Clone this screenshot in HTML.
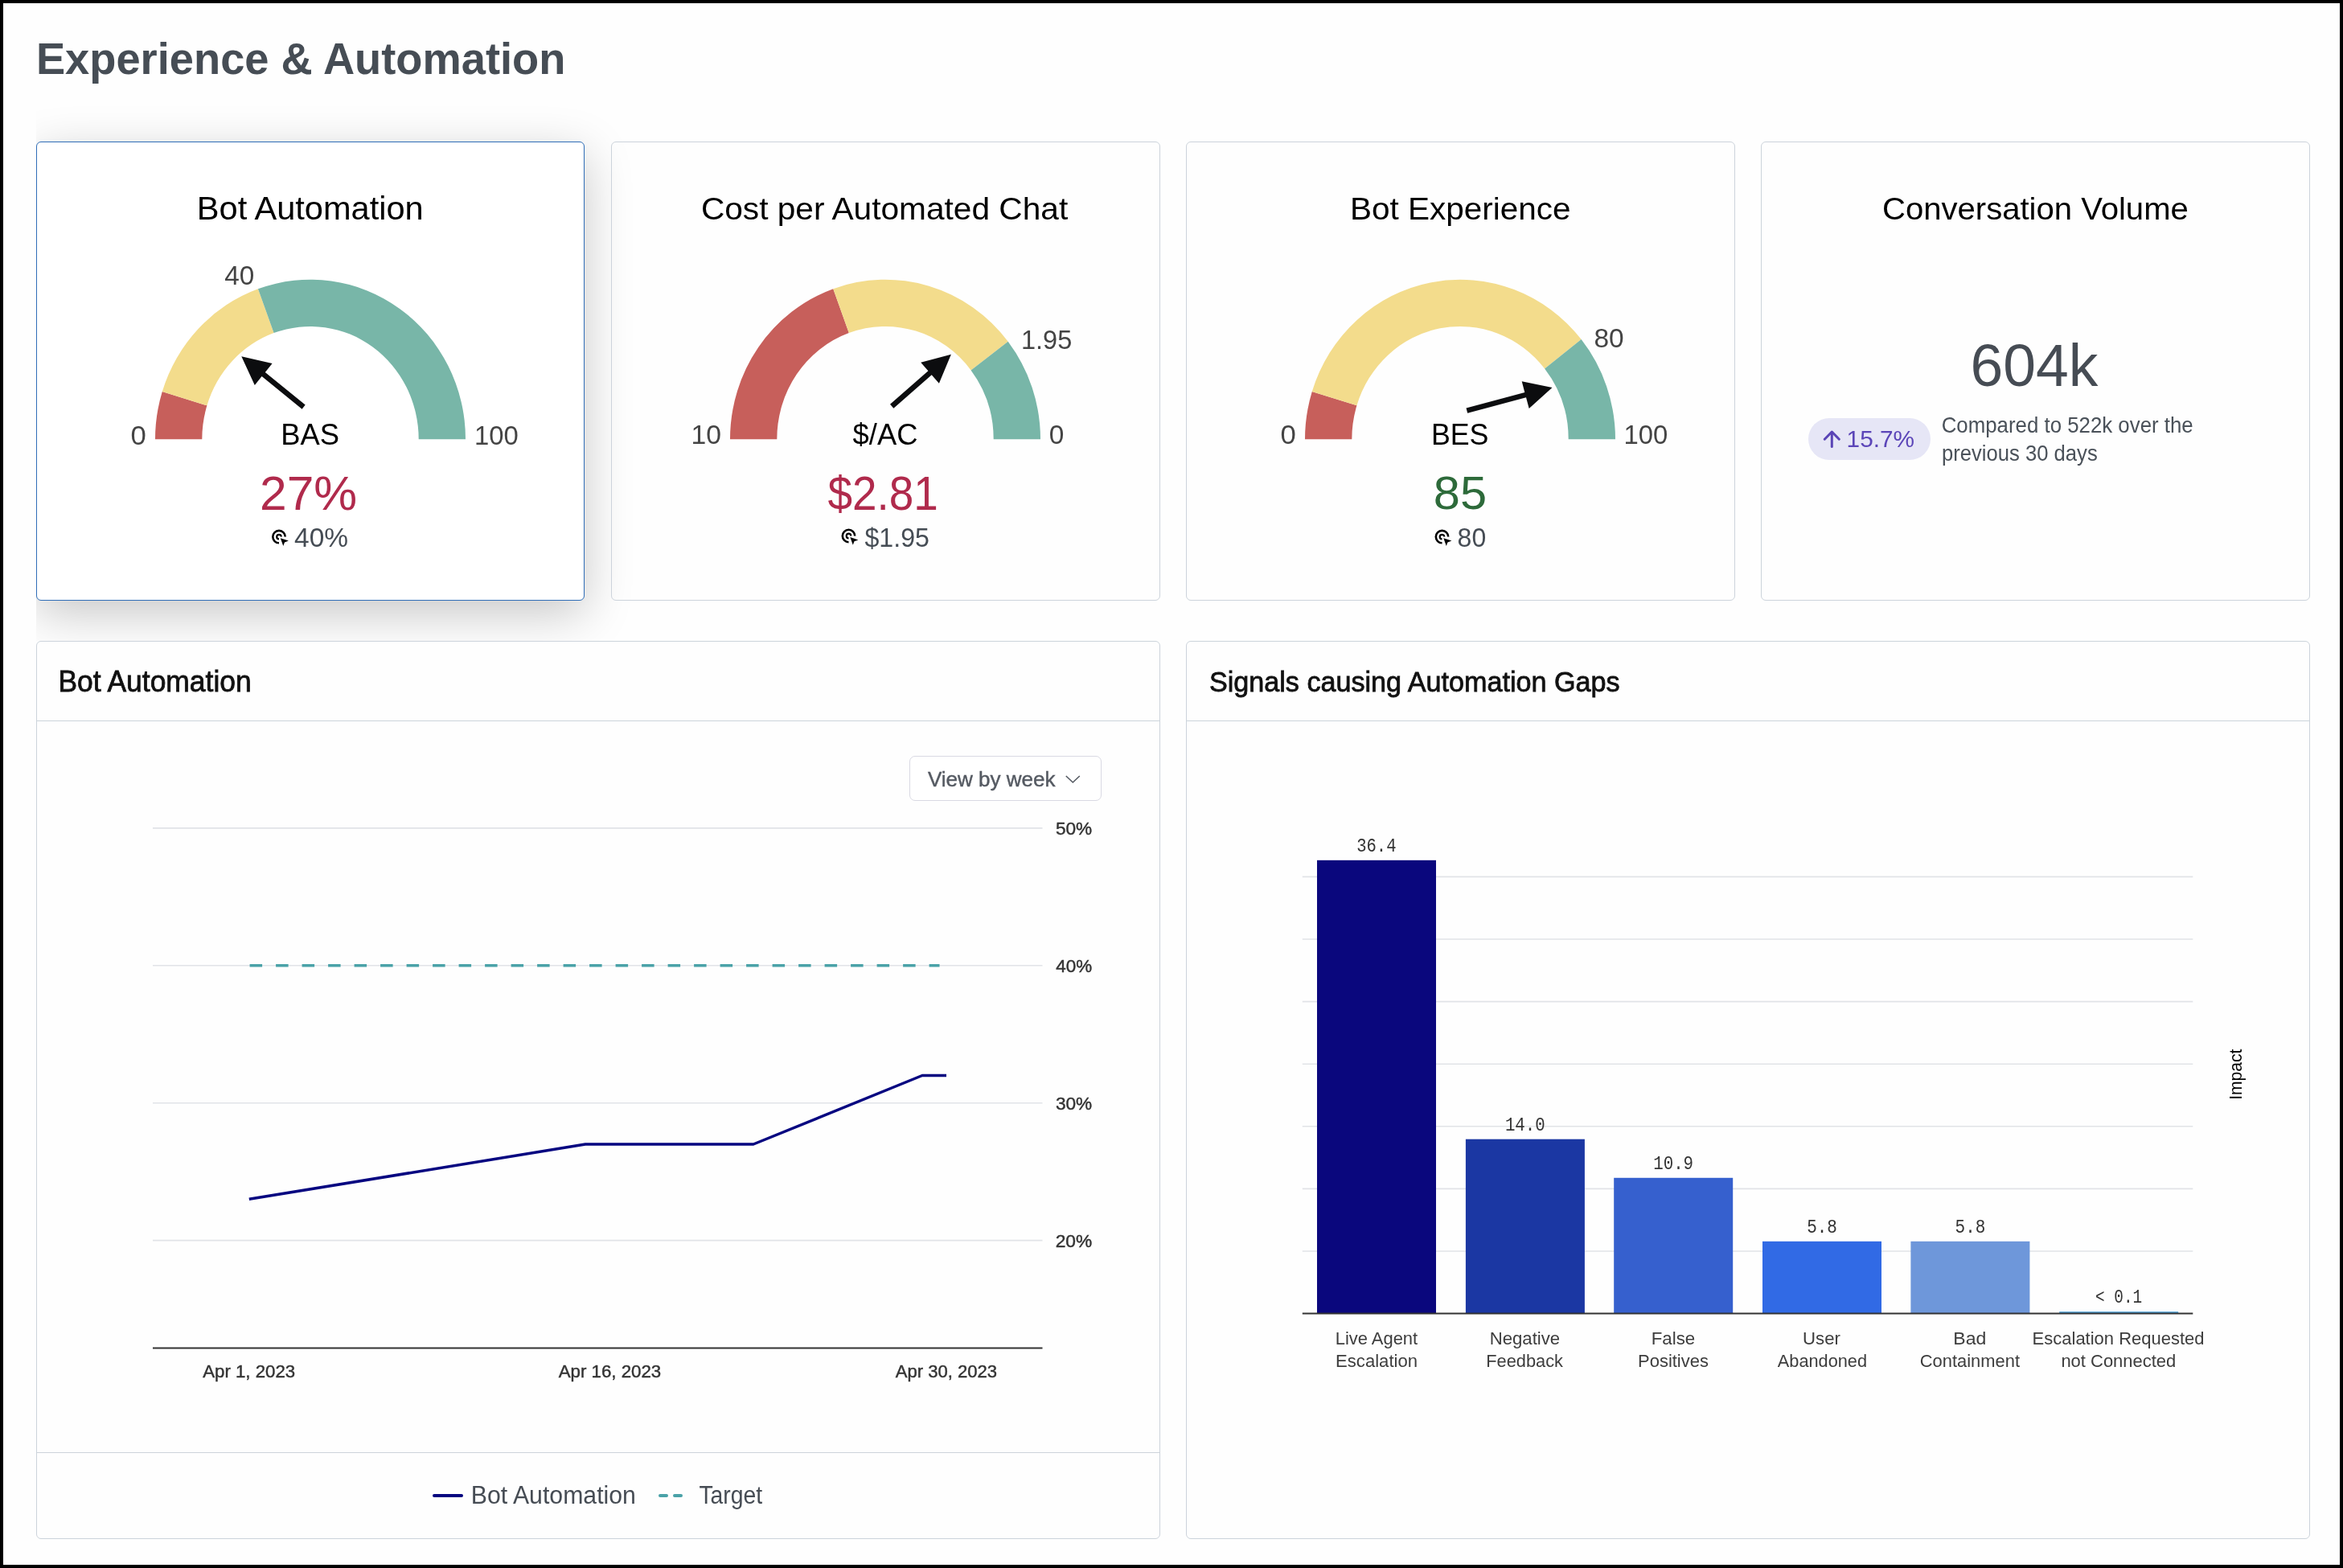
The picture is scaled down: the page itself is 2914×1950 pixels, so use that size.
<!DOCTYPE html>
<html><head><meta charset="utf-8"><style>
html,body{margin:0;padding:0;}
body{width:2914px;height:1950px;position:relative;overflow:hidden;background:#fefefe;font-family:"Liberation Sans",sans-serif;}
.card{position:absolute;box-sizing:border-box;border:1.2px solid #ccd3db;border-radius:6px;}
.div{position:absolute;height:0;border-top:1.2px solid #ccd3db;}
#clip{position:absolute;left:45px;top:0;width:1600px;height:797px;overflow:hidden;}
#c1{position:absolute;left:0;top:176px;width:682px;height:571px;box-sizing:border-box;border:1.3px solid #2f6db7;border-radius:6px;background:#fff;box-shadow:0 16px 60px rgba(0,0,0,0.22);}
#frame{position:absolute;left:0;top:0;width:2914px;height:1950px;box-sizing:border-box;border:4px solid #000;}
svg{position:absolute;left:0;top:0;will-change:transform;}
</style></head><body>
<div id="clip"><div id="c1"></div></div>
<div class="card" style="left:760px;top:176px;width:683px;height:571px;"></div>
<div class="card" style="left:1475px;top:176px;width:683px;height:571px;"></div>
<div class="card" style="left:2190px;top:176px;width:683px;height:571px;"></div>
<div class="card" style="left:45px;top:797px;width:1398px;height:1117px;"></div>
<div class="div" style="left:45px;top:895.5px;width:1398px;"></div>
<div class="div" style="left:45px;top:1806px;width:1398px;"></div>
<div class="card" style="left:1475px;top:797px;width:1398px;height:1117px;"></div>
<div class="div" style="left:1475px;top:895.5px;width:1398px;"></div>
<div style="position:absolute;left:1131px;top:940px;width:238.5px;height:55.5px;box-sizing:border-box;border:1.2px solid #d9d9e3;border-radius:7px;background:#fff"></div>
<div style="position:absolute;left:2249px;top:520px;width:151.6px;height:52px;border-radius:26px;background:#e6e6f6"></div>
<svg width="2914" height="1950" viewBox="0 0 2914 1950">
<g>
<line x1="2278.3" y1="537.5" x2="2278.3" y2="555.5" stroke="#5a44b6" stroke-width="3" stroke-linecap="round"/>
<polyline points="2269.3,546.2 2278.3,537 2287.3,546.2" fill="none" stroke="#5a44b6" stroke-width="3" stroke-linecap="round" stroke-linejoin="round"/>
</g>
<path d="M193.00,546.20 A193.0,198.5 0 0 1 201.78,487.01 L257.43,504.36 A134.7,140.3 0 0 0 251.30,546.20 Z" fill="#c75f5b"/>
<path d="M201.78,487.01 A193.0,198.5 0 0 1 320.94,359.32 L340.59,414.11 A134.7,140.3 0 0 0 257.43,504.36 Z" fill="#f3dc8c"/>
<path d="M320.94,359.32 A193.0,198.5 0 0 1 579.00,546.20 L520.70,546.20 A134.7,140.3 0 0 0 340.59,414.11 Z" fill="#78b6a8"/>
<polygon points="379.7,503.6 329.8,463.0 338.6,452.1 300.3,443.3 316.8,479.0 325.6,468.1 375.6,508.7" fill="#0c0d0f"/>
<path d="M908.00,546.20 A193.0,198.5 0 0 1 1036.26,359.20 L1055.81,414.03 A134.7,140.3 0 0 0 966.30,546.20 Z" fill="#c75f5b"/>
<path d="M1036.26,359.20 A193.0,198.5 0 0 1 1253.71,424.81 L1207.58,460.40 A134.7,140.3 0 0 0 1055.81,414.03 Z" fill="#f3dc8c"/>
<path d="M1253.71,424.81 A193.0,198.5 0 0 1 1294.00,546.20 L1235.70,546.20 A134.7,140.3 0 0 0 1207.58,460.40 Z" fill="#78b6a8"/>
<polygon points="1111.4,507.7 1158.7,466.3 1167.9,476.8 1182.9,440.8 1145.2,450.8 1154.4,461.3 1107.0,502.7" fill="#0c0d0f"/>
<path d="M1623.00,546.20 A193.0,198.5 0 0 1 1631.78,487.01 L1687.43,504.36 A134.7,140.3 0 0 0 1681.30,546.20 Z" fill="#c75f5b"/>
<path d="M1631.78,487.01 A193.0,198.5 0 0 1 1966.62,422.09 L1921.12,458.48 A134.7,140.3 0 0 0 1687.43,504.36 Z" fill="#f3dc8c"/>
<path d="M1966.62,422.09 A193.0,198.5 0 0 1 2009.00,546.20 L1950.70,546.20 A134.7,140.3 0 0 0 1921.12,458.48 Z" fill="#78b6a8"/>
<polygon points="1825.2,513.8 1898.0,494.2 1901.7,507.9 1930.5,482.1 1892.7,474.2 1896.3,487.9 1823.5,507.4" fill="#0c0d0f"/>
<text x="244.8" y="273.1" font-family="Liberation Sans" font-weight="normal" font-size="41.13" textLength="281.9" lengthAdjust="spacingAndGlyphs" fill="#000" >Bot Automation</text>
<text x="871.9" y="272.6" font-family="Liberation Sans" font-weight="normal" font-size="39.39" textLength="456.3" lengthAdjust="spacingAndGlyphs" fill="#000" >Cost per Automated Chat</text>
<text x="1679.1" y="272.6" font-family="Liberation Sans" font-weight="normal" font-size="39.39" textLength="274.5" lengthAdjust="spacingAndGlyphs" fill="#000" >Bot Experience</text>
<text x="2341.0" y="272.6" font-family="Liberation Sans" font-weight="normal" font-size="39.39" textLength="380.8" lengthAdjust="spacingAndGlyphs" fill="#000" >Conversation Volume</text>
<text x="162.6" y="552.6" font-family="Liberation Sans" font-weight="normal" font-size="32.94" textLength="19.3" lengthAdjust="spacingAndGlyphs" fill="#444444" >0</text>
<text x="590.1" y="552.6" font-family="Liberation Sans" font-weight="normal" font-size="32.94" textLength="54.8" lengthAdjust="spacingAndGlyphs" fill="#444444" >100</text>
<text x="279.2" y="353.6" font-family="Liberation Sans" font-weight="normal" font-size="32.94" textLength="37.1" lengthAdjust="spacingAndGlyphs" fill="#444444" >40</text>
<text x="349.3" y="553.3" font-family="Liberation Sans" font-weight="normal" font-size="37.06" textLength="72.8" lengthAdjust="spacingAndGlyphs" fill="#000" >BAS</text>
<text x="323.0" y="633.7" font-family="Liberation Sans" font-weight="normal" font-size="59.72" textLength="121.2" lengthAdjust="spacingAndGlyphs" fill="#b02a4c" >27%</text>
<path d="M354.70,667.60 A7.70,7.70 0 1 0 347.00,675.30" fill="none" stroke="#000" stroke-width="2.60"/>
<path d="M349.80,667.60 A2.80,2.80 0 1 0 347.00,670.40" fill="none" stroke="#000" stroke-width="2.20"/>
<polygon points="348.8,669.2 358.9,672.5 353.9,674.4 352.3,678.9" fill="#000"/>
<text x="366.1" y="680.0" font-family="Liberation Sans" font-weight="normal" font-size="32.94" textLength="67.0" lengthAdjust="spacingAndGlyphs" fill="#454c54" >40%</text>
<text x="859.4" y="552.0" font-family="Liberation Sans" font-weight="normal" font-size="32.94" textLength="37.5" lengthAdjust="spacingAndGlyphs" fill="#444444" >10</text>
<text x="1304.7" y="552.0" font-family="Liberation Sans" font-weight="normal" font-size="32.94" textLength="18.6" lengthAdjust="spacingAndGlyphs" fill="#444444" >0</text>
<text x="1270.0" y="433.6" font-family="Liberation Sans" font-weight="normal" font-size="32.37" textLength="63.3" lengthAdjust="spacingAndGlyphs" fill="#444444" >1.95</text>
<text x="1060.6" y="553.0" font-family="Liberation Sans" font-weight="normal" font-size="36.34" textLength="80.8" lengthAdjust="spacingAndGlyphs" fill="#000" >$/AC</text>
<text x="1029.4" y="633.7" font-family="Liberation Sans" font-weight="normal" font-size="59.72" textLength="137.3" lengthAdjust="spacingAndGlyphs" fill="#b02a4c" >$2.81</text>
<path d="M1063.20,666.50 A7.70,7.70 0 1 0 1055.50,674.20" fill="none" stroke="#000" stroke-width="2.60"/>
<path d="M1058.30,666.50 A2.80,2.80 0 1 0 1055.50,669.30" fill="none" stroke="#000" stroke-width="2.20"/>
<polygon points="1057.3,668.1 1067.4,671.4 1062.4,673.3 1060.8,677.8" fill="#000"/>
<text x="1075.5" y="680.0" font-family="Liberation Sans" font-weight="normal" font-size="33.43" textLength="80.4" lengthAdjust="spacingAndGlyphs" fill="#454c54" >$1.95</text>
<text x="1592.6" y="552.0" font-family="Liberation Sans" font-weight="normal" font-size="32.94" textLength="19.3" lengthAdjust="spacingAndGlyphs" fill="#444444" >0</text>
<text x="2019.5" y="552.0" font-family="Liberation Sans" font-weight="normal" font-size="32.94" textLength="54.8" lengthAdjust="spacingAndGlyphs" fill="#444444" >100</text>
<text x="1982.4" y="431.6" font-family="Liberation Sans" font-weight="normal" font-size="33.66" textLength="37.2" lengthAdjust="spacingAndGlyphs" fill="#444444" >80</text>
<text x="1779.9" y="553.2" font-family="Liberation Sans" font-weight="normal" font-size="37.06" textLength="71.6" lengthAdjust="spacingAndGlyphs" fill="#000" >BES</text>
<text x="1782.8" y="633.0" font-family="Liberation Sans" font-weight="normal" font-size="57.29" textLength="66.3" lengthAdjust="spacingAndGlyphs" fill="#2d6a3a" >85</text>
<path d="M1801.20,667.60 A7.70,7.70 0 1 0 1793.50,675.30" fill="none" stroke="#000" stroke-width="2.60"/>
<path d="M1796.30,667.60 A2.80,2.80 0 1 0 1793.50,670.40" fill="none" stroke="#000" stroke-width="2.20"/>
<polygon points="1795.3,669.2 1805.4,672.5 1800.4,674.4 1798.8,678.9" fill="#000"/>
<text x="1812.6" y="680.0" font-family="Liberation Sans" font-weight="normal" font-size="32.94" textLength="35.6" lengthAdjust="spacingAndGlyphs" fill="#454c54" >80</text>
<text x="2450.6" y="480.0" font-family="Liberation Sans" font-weight="normal" font-size="73.33" textLength="158.9" lengthAdjust="spacingAndGlyphs" fill="#464c54" >604k</text>
<text x="2296.6" y="556.0" font-family="Liberation Sans" font-weight="normal" font-size="29.80" textLength="84.4" lengthAdjust="spacingAndGlyphs" fill="#5b45b8" >15.7%</text>
<text x="2414.7" y="538.1" font-family="Liberation Sans" font-weight="normal" font-size="27.04" textLength="313.0" lengthAdjust="spacingAndGlyphs" fill="#4a5159" >Compared to 522k over the</text>
<text x="2415.0" y="572.9" font-family="Liberation Sans" font-weight="normal" font-size="27.04" textLength="193.7" lengthAdjust="spacingAndGlyphs" fill="#4a5159" >previous 30 days</text>
<text x="44.9" y="91.8" font-family="Liberation Sans" font-weight="bold" font-size="55.81" textLength="658.5" lengthAdjust="spacingAndGlyphs" fill="#464d55" >Experience &amp; Automation</text>
<text x="72.4" y="860.2" font-family="Liberation Sans" font-weight="normal" font-size="36.05" textLength="240.3" lengthAdjust="spacingAndGlyphs" fill="#111" stroke="#111" stroke-width="0.8">Bot Automation</text>
<text x="1503.9" y="859.8" font-family="Liberation Sans" font-weight="normal" font-size="34.74" textLength="510.7" lengthAdjust="spacingAndGlyphs" fill="#111" stroke="#111" stroke-width="0.8">Signals causing Automation Gaps</text>
<line x1="190" y1="1029.9" x2="1296.5" y2="1029.9" stroke="#e1e3e7" stroke-width="1.6"/>
<text x="1312.9" y="1037.9" font-family="Liberation Sans" font-weight="normal" font-size="22.91" textLength="45.3" lengthAdjust="spacingAndGlyphs" fill="#333" stroke="#333" stroke-width="0.45">50%</text>
<line x1="190" y1="1200.8" x2="1296.5" y2="1200.8" stroke="#e1e3e7" stroke-width="1.6"/>
<text x="1313.3" y="1208.8" font-family="Liberation Sans" font-weight="normal" font-size="22.91" textLength="44.9" lengthAdjust="spacingAndGlyphs" fill="#333" stroke="#333" stroke-width="0.45">40%</text>
<line x1="190" y1="1371.7" x2="1296.5" y2="1371.7" stroke="#e1e3e7" stroke-width="1.6"/>
<text x="1312.9" y="1379.7" font-family="Liberation Sans" font-weight="normal" font-size="22.91" textLength="45.3" lengthAdjust="spacingAndGlyphs" fill="#333" stroke="#333" stroke-width="0.45">30%</text>
<line x1="190" y1="1542.6" x2="1296.5" y2="1542.6" stroke="#e1e3e7" stroke-width="1.6"/>
<text x="1312.7" y="1550.6" font-family="Liberation Sans" font-weight="normal" font-size="22.91" textLength="45.6" lengthAdjust="spacingAndGlyphs" fill="#333" stroke="#333" stroke-width="0.45">20%</text>
<line x1="190" y1="1676.5" x2="1296.5" y2="1676.5" stroke="#333" stroke-width="2"/>
<line x1="310.6" y1="1200.8" x2="1168.5" y2="1200.8" stroke="#4aa2a8" stroke-width="3.5" stroke-dasharray="15.5 17"/>
<polyline points="309.8,1491.3 728,1423 937,1423 1147,1337.5 1177,1337.5" fill="none" stroke="#050580" stroke-width="3.5" stroke-linejoin="round"/>
<text x="252.3" y="1712.8" font-family="Liberation Sans" font-weight="normal" font-size="22.53" textLength="114.8" lengthAdjust="spacingAndGlyphs" fill="#333" stroke="#333" stroke-width="0.45">Apr 1, 2023</text>
<text x="694.7" y="1712.8" font-family="Liberation Sans" font-weight="normal" font-size="22.53" textLength="127.5" lengthAdjust="spacingAndGlyphs" fill="#333" stroke="#333" stroke-width="0.45">Apr 16, 2023</text>
<text x="1113.7" y="1712.8" font-family="Liberation Sans" font-weight="normal" font-size="22.53" textLength="126.3" lengthAdjust="spacingAndGlyphs" fill="#333" stroke="#333" stroke-width="0.45">Apr 30, 2023</text>
<line x1="540" y1="1859.9" x2="574" y2="1859.9" stroke="#050580" stroke-width="4" stroke-linecap="round"/>
<line x1="821" y1="1859.9" x2="848" y2="1859.9" stroke="#4aa2a8" stroke-width="4" stroke-linecap="round" stroke-dasharray="8 10"/>
<text x="585.8" y="1870.1" font-family="Liberation Sans" font-weight="normal" font-size="30.81" textLength="205.1" lengthAdjust="spacingAndGlyphs" fill="#464c54" >Bot Automation</text>
<text x="869.4" y="1870.1" font-family="Liberation Sans" font-weight="normal" font-size="30.81" textLength="78.8" lengthAdjust="spacingAndGlyphs" fill="#464c54" >Target</text>
<text x="1153.9" y="978.3" font-family="Liberation Sans" font-weight="normal" font-size="26.60" textLength="158.6" lengthAdjust="spacingAndGlyphs" fill="#555a62" stroke="#555a62" stroke-width="0.45">View by week</text>
<polyline points="1325.8,965 1334.3,973 1342.8,965" fill="none" stroke="#555a62" stroke-width="1.6"/>
<line x1="1619.8" y1="1556.0" x2="2727.3" y2="1556.0" stroke="#e1e3e7" stroke-width="1.6"/>
<line x1="1619.8" y1="1478.4" x2="2727.3" y2="1478.4" stroke="#e1e3e7" stroke-width="1.6"/>
<line x1="1619.8" y1="1400.8" x2="2727.3" y2="1400.8" stroke="#e1e3e7" stroke-width="1.6"/>
<line x1="1619.8" y1="1323.2" x2="2727.3" y2="1323.2" stroke="#e1e3e7" stroke-width="1.6"/>
<line x1="1619.8" y1="1245.6" x2="2727.3" y2="1245.6" stroke="#e1e3e7" stroke-width="1.6"/>
<line x1="1619.8" y1="1168.0" x2="2727.3" y2="1168.0" stroke="#e1e3e7" stroke-width="1.6"/>
<line x1="1619.8" y1="1090.4" x2="2727.3" y2="1090.4" stroke="#e1e3e7" stroke-width="1.6"/>
<text x="1660.7" y="1671.9" font-family="Liberation Sans" font-weight="normal" font-size="22.09" textLength="102.5" lengthAdjust="spacingAndGlyphs" fill="#3d3d3d" >Live Agent</text>
<text x="1661.1" y="1700.0" font-family="Liberation Sans" font-weight="normal" font-size="22.09" textLength="101.9" lengthAdjust="spacingAndGlyphs" fill="#3d3d3d" >Escalation</text>
<text x="1852.7" y="1671.9" font-family="Liberation Sans" font-weight="normal" font-size="22.09" textLength="87.5" lengthAdjust="spacingAndGlyphs" fill="#3d3d3d" >Negative</text>
<text x="1848.3" y="1700.0" font-family="Liberation Sans" font-weight="normal" font-size="22.09" textLength="95.7" lengthAdjust="spacingAndGlyphs" fill="#3d3d3d" >Feedback</text>
<text x="2053.7" y="1671.9" font-family="Liberation Sans" font-weight="normal" font-size="22.09" textLength="54.5" lengthAdjust="spacingAndGlyphs" fill="#3d3d3d" >False</text>
<text x="2037.1" y="1700.0" font-family="Liberation Sans" font-weight="normal" font-size="22.09" textLength="87.8" lengthAdjust="spacingAndGlyphs" fill="#3d3d3d" >Positives</text>
<text x="2242.1" y="1671.9" font-family="Liberation Sans" font-weight="normal" font-size="22.09" textLength="46.8" lengthAdjust="spacingAndGlyphs" fill="#3d3d3d" >User</text>
<text x="2210.8" y="1700.0" font-family="Liberation Sans" font-weight="normal" font-size="22.09" textLength="111.2" lengthAdjust="spacingAndGlyphs" fill="#3d3d3d" >Abandoned</text>
<text x="2429.3" y="1671.9" font-family="Liberation Sans" font-weight="normal" font-size="22.09" textLength="41.0" lengthAdjust="spacingAndGlyphs" fill="#3d3d3d" >Bad</text>
<text x="2387.8" y="1700.0" font-family="Liberation Sans" font-weight="normal" font-size="22.09" textLength="124.2" lengthAdjust="spacingAndGlyphs" fill="#3d3d3d" >Containment</text>
<text x="2527.6" y="1671.9" font-family="Liberation Sans" font-weight="normal" font-size="22.09" textLength="214.0" lengthAdjust="spacingAndGlyphs" fill="#3d3d3d" >Escalation Requested</text>
<text x="2563.4" y="1700.0" font-family="Liberation Sans" font-weight="normal" font-size="22.09" textLength="142.9" lengthAdjust="spacingAndGlyphs" fill="#3d3d3d" >not Connected</text>
<rect x="1638" y="1069.8" width="148" height="563.8" fill="#0a077d"/>
<text x="1687.2" y="1059.1" font-family="Liberation Mono" font-weight="normal" font-size="23.54" textLength="49.3" lengthAdjust="spacingAndGlyphs" fill="#333" >36.4</text>
<rect x="1822.9" y="1416.7" width="148" height="216.9" fill="#1b37a3"/>
<text x="1871.9" y="1406.0" font-family="Liberation Mono" font-weight="normal" font-size="23.54" textLength="49.8" lengthAdjust="spacingAndGlyphs" fill="#333" >14.0</text>
<rect x="2007.2" y="1464.8" width="148" height="168.8" fill="#3660ce"/>
<text x="2056.2" y="1454.1" font-family="Liberation Mono" font-weight="normal" font-size="23.54" textLength="49.9" lengthAdjust="spacingAndGlyphs" fill="#333" >10.9</text>
<rect x="2192" y="1543.8" width="148" height="89.8" fill="#316ae5"/>
<text x="2247.2" y="1533.1" font-family="Liberation Mono" font-weight="normal" font-size="23.54" textLength="37.7" lengthAdjust="spacingAndGlyphs" fill="#333" >5.8</text>
<rect x="2376.4" y="1543.8" width="148" height="89.8" fill="#6e97da"/>
<text x="2431.6" y="1533.1" font-family="Liberation Mono" font-weight="normal" font-size="23.54" textLength="37.7" lengthAdjust="spacingAndGlyphs" fill="#333" >5.8</text>
<rect x="2561.2" y="1631.1" width="148" height="2.5" fill="#56a5d8"/>
<text x="2606.1" y="1620.4" font-family="Liberation Mono" font-weight="normal" font-size="23.54" textLength="58.1" lengthAdjust="spacingAndGlyphs" fill="#333" >&lt; 0.1</text>
<line x1="1619.8" y1="1633.6" x2="2727.3" y2="1633.6" stroke="#333" stroke-width="2"/>
<text x="0" y="0" transform="translate(2787.8,1336.2) rotate(-90)" font-family="Liberation Sans" font-size="22.2" text-anchor="middle" textLength="63.2" lengthAdjust="spacingAndGlyphs" fill="#000">Impact</text>
</svg>
<div id="frame"></div>
</body></html>
